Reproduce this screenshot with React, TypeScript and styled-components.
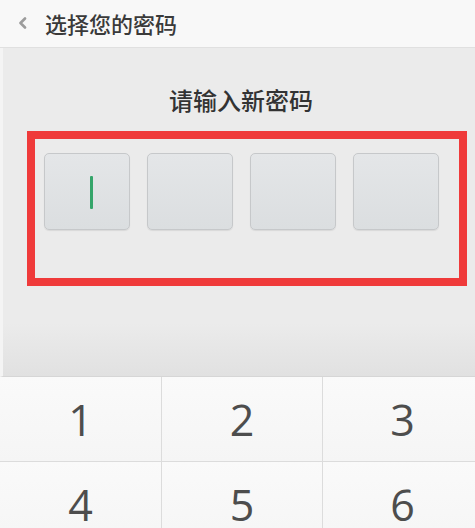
import React from "react";
import styled, { createGlobalStyle } from "styled-components";

const Global = createGlobalStyle`
  html, body { margin: 0; padding: 0; }
  body {
    width: 475px;
    height: 528px;
    overflow: hidden;
    background: #ebebeb;
    font-family: "Noto Sans CJK SC", "Noto Sans", sans-serif;
  }
`;

const Screen = styled.div`
  width: 475px;
  height: 528px;
  display: flex;
  flex-direction: column;
  overflow: hidden;
`;

const Header = styled.header`
  height: 47px;
  flex: none;
  display: flex;
  align-items: center;
  background: #f8f8f8;
  border-bottom: 1px solid #e0e0e0;
  padding-left: 18px;
  box-sizing: content-box;
`;

const Back = styled.svg`
  width: 9px;
  height: 12px;
  margin-right: 18px;
  margin-top: -1px;
  flex: none;
`;

const HeaderTitle = styled.h1`
  margin: 0;
  font-size: 22px;
  font-weight: 500;
  color: #3a3a3a;
  line-height: 1;
  margin-top: -2px;
`;

const Body = styled.main`
  height: 329px;
  flex: none;
  box-sizing: border-box;
  border-left: 3px solid #f4f4f4;
  border-bottom: 1px solid #d6d6d6;
  background: linear-gradient(#ebebeb 0%, #ebebeb 84%, #e1e1e1 100%);
  display: flex;
  flex-direction: column;
  align-items: flex-start;
  padding-top: 37px;
`;

const Prompt = styled.h2`
  margin: 0;
  align-self: stretch;
  text-align: center;
  padding-left: 4px;
  font-size: 24px;
  line-height: 30px;
  font-weight: 500;
  color: #333;
`;

const Highlight = styled.div`
  margin-top: 16px;
  margin-left: 24px;
  width: 440px;
  height: 155px;
  box-sizing: border-box;
  border: 8px solid #ef3a3a;
  padding: 14px 0 0 9px;
`;

const Cells = styled.div`
  display: grid;
  grid-template-columns: repeat(4, 86px);
  column-gap: 17px;
`;

const Cell = styled.div`
  height: 77px;
  box-sizing: border-box;
  border: 1px solid #c6c8ca;
  border-radius: 5px;
  background: linear-gradient(#e4e6e8, #dbdee0);
  box-shadow: 0 1px 1px rgba(0, 0, 0, 0.08);
  display: flex;
  align-items: center;
  justify-content: center;
`;

const Caret = styled.span`
  width: 2.5px;
  height: 33px;
  margin-top: 2px;
  margin-left: 9px;
  background: #35a56a;
  border-radius: 1px;
`;

const Keypad = styled.div`
  flex: 1;
  display: grid;
  grid-template-columns: 162px 161px 161px;
  grid-auto-rows: 85px;
  background: #f8f8f8;
`;

const Key = styled.div<{ $last?: boolean }>`
  display: flex;
  align-items: center;
  justify-content: center;
  border-right: ${(p) => (p.$last ? "none" : "1px solid #dcdcdc")};
  border-bottom: 1px solid #dcdcdc;
  font-family: "Open Sans", "Noto Sans", sans-serif;
  font-size: 43px;
  color: #4d4d4d;
  padding-right: ${(p) => (p.$last ? "2px" : "0")};
  background: linear-gradient(#fafafa, #f5f5f5);
`;

const keys = ["1", "2", "3", "4", "5", "6"];

export default function App() {
  return (
    <>
      <Global />
      <Screen>
        <Header>
          <Back viewBox="0 0 9 12">
            <path
              d="M7 1.5 L2.5 6 L7 10.5"
              fill="none"
              stroke="#9c9c9c"
              strokeWidth="2.6"
              strokeLinecap="round"
              strokeLinejoin="round"
            />
          </Back>
          <HeaderTitle>选择您的密码</HeaderTitle>
        </Header>
        <Body>
          <Prompt>请输入新密码</Prompt>
          <Highlight>
            <Cells>
              <Cell>
                <Caret />
              </Cell>
              <Cell />
              <Cell />
              <Cell />
            </Cells>
          </Highlight>
        </Body>
        <Keypad>
          {keys.map((k, i) => (
            <Key key={k} $last={i % 3 === 2}>
              {k}
            </Key>
          ))}
        </Keypad>
      </Screen>
    </>
  );
}
